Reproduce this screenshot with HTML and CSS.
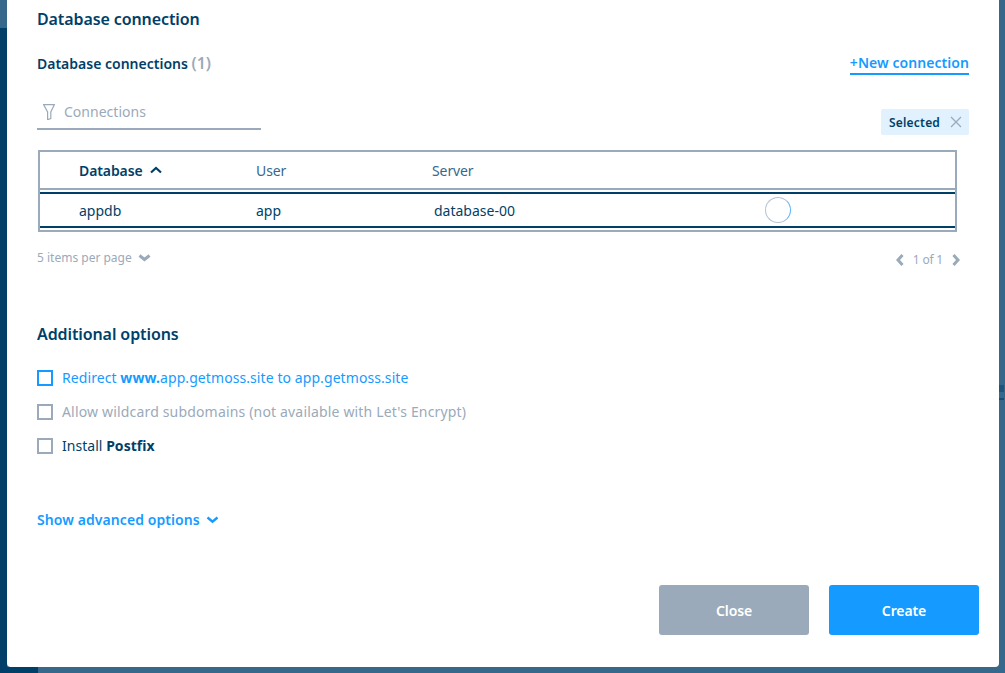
FILE: index.html
```html
<!DOCTYPE html>
<html lang="en">
<head>
<meta charset="utf-8">
<title>Database connection</title>
<link rel="stylesheet" href="styles.css">
</head>
<body>
<div class="backdrop-tab top"></div>
<div class="backdrop-tab bottom"></div>
<div class="backdrop-tab right-a"></div>
<div class="backdrop-tab right-b"></div>
<main class="modal">
  <h2 class="title">Database connection</h2>
  <div class="conn-head">
    <h3 class="subtitle">Database connections <span class="count">(1)</span></h3>
    <a class="new-link">+New connection</a>
  </div>
  <div class="filter-row">
    <div class="filter">
      <svg class="funnel" width="12" height="16" viewBox="0 0 12 16" fill="none" stroke="#9aaaba" stroke-width="1.2"><path d="M.7.7h10.6L7.8 8v6.6l-3.2 1V8z"/></svg>
      <span>Connections</span>
    </div>
    <div class="chip">Selected
      <svg width="12" height="12" viewBox="0 0 12 12" stroke="#9aaaba" stroke-width="1.3"><path d="M1 1l10 10M11 1L1 11"/></svg>
    </div>
  </div>
  <div class="table">
    <div class="row head">
      <span class="col c1 sort">Database
        <svg width="12" height="8" viewBox="0 0 12 8" fill="none" stroke="#003f68" stroke-width="2.2"><path d="M1 6.5l5-4.5 5 4.5"/></svg>
      </span>
      <span class="col c2">User</span>
      <span class="col c3">Server</span>
    </div>
    <div class="row body">
      <span class="col c1">appdb</span>
      <span class="col c2">app</span>
      <span class="col c3 srv">database-00</span>
      <span class="radio"></span>
    </div>
  </div>
  <div class="pager">
    <span class="per">5 items per page
      <svg width="13" height="8" viewBox="0 0 13 8" fill="none" stroke="#9aaaba" stroke-width="3"><path d="M1.5 1.5l5 4 5-4"/></svg>
    </span>
    <span class="pages">
      <svg width="8" height="12" viewBox="0 0 8 12" fill="none" stroke="#9aaaba" stroke-width="3"><path d="M6.5 1L2 6l4.5 5"/></svg>
      <span>1 of 1</span>
      <svg width="8" height="12" viewBox="0 0 8 12" fill="none" stroke="#9aaaba" stroke-width="3"><path d="M1.5 1L6 6l-4.5 5"/></svg>
    </span>
  </div>
  <h2 class="title options">Additional options</h2>
  <label class="check blue"><span class="box"></span><span>Redirect <b>www.</b>app.getmoss.site to app.getmoss.site</span></label>
  <label class="check muted"><span class="box"></span><span>Allow wildcard subdomains (not available with Let's Encrypt)</span></label>
  <label class="check dark"><span class="box"></span><span>Install <b>Postfix</b></span></label>
  <a class="advanced">Show advanced options
    <svg width="13" height="8" viewBox="0 0 13 8" fill="none" stroke="#159bff" stroke-width="2.4"><path d="M1.5 1.5l5 4.2 5-4.2"/></svg>
  </a>
  <div class="actions">
    <button class="btn close">Close</button>
    <button class="btn create">Create</button>
  </div>
</main>
</body>
</html>
```
FILE: styles.css
```css
* { box-sizing: border-box; }
html, body { margin: 0; height: 100%; overflow: hidden; }
body {
  background: #36688c;
  font-family: "Noto Sans", sans-serif;
  color: #003f68;
  position: relative;
  padding: 0 6px 6px 7px;
}
.backdrop-tab { position: absolute; background: #003f68; }
.backdrop-tab.top { left: 0; top: 28px; width: 7px; height: 645px; }
.backdrop-tab.bottom { left: 0; top: 667px; width: 38px; height: 6px; }
.backdrop-tab.right-a { right: 1px; top: 385px; width: 5px; height: 7px; opacity: .45; }
.backdrop-tab.right-b { right: 1px; top: 398px; width: 5px; height: 2px; opacity: .6; }
.modal {
  position: relative;
  height: 667px;
  background: #fff;
  border-radius: 0 0 4px 4px;
  padding: 9px 20px 32px 30px;
  display: flex;
  flex-direction: column;
}
.title { margin: 0; font-size: 16px; line-height: 20px; font-weight: 600; letter-spacing: -.1px; }
.conn-head { display: flex; justify-content: space-between; align-items: flex-start; margin-top: 25px; padding-right: 10px; }
.subtitle { margin: 0; font-size: 14px; line-height: 18px; font-weight: 600; }
.count { color: #9aaaba; font-size: 16px; }
.new-link { color: #159bff; font-size: 14px; line-height: 18px; font-weight: 600; letter-spacing: .06px; border-bottom: 2px solid #159bff; padding-bottom: 1px; }
.filter-row { display: flex; justify-content: space-between; align-items: flex-start; margin-top: 20px; padding-right: 10px; height: 40px; }
.filter { width: 224px; height: 35px; border-bottom: 2px solid #9aaaba; color: #9aaaba; font-size: 14px; display: flex; align-items: center; gap: 10px; padding: 0 0 0 6px; letter-spacing: .02px; }
.funnel { margin-right: -1px; }
.chip { background: #e1f1fd; border-radius: 2px; height: 26px; width: 88px; padding: 0 7px 0 8px; display: flex; align-items: center; justify-content: space-between; font-size: 12px; font-weight: 600; letter-spacing: .2px; margin-top: 14px; }
.table { margin: 15px 22px 0 1px; height: 82px; flex: none; border: 2px solid #9aaaba; }
.row { display: flex; align-items: center; position: relative; font-size: 14px; }
.row.head { height: 38px; color: #36688c; border-bottom: 2px solid #9aaaba; letter-spacing: -.1px; }
.row.body { height: 36px; margin-top: 2px; border-top: 2px solid #003f68; border-bottom: 2px solid #003f68; }
.col.c1 { width: 216px; padding-left: 39px; }
.col.c2 { width: 176px; }
.col.srv { padding-left: 2px; }
.sort { color: #003f68; font-weight: 600; display: flex; align-items: center; gap: 7px; }
.radio { position: absolute; left: 725px; top: 3px; width: 26px; height: 26px; border-radius: 50%; border: 1px solid #b3c3d2; border-right-color: #58b4ff; }
.pager { display: flex; justify-content: space-between; margin-top: 14px; padding-right: 19px; color: #9aaaba; font-size: 12px; line-height: 20px; }
.per { display: flex; align-items: center; gap: 6px; }
.pages { display: flex; align-items: center; gap: 9px; letter-spacing: -.2px; margin-top: 4px; }
.options { margin-top: 54px; }
.check { display: flex; align-items: center; gap: 9px; font-size: 14px; line-height: 20px; margin-top: 14px; letter-spacing: .03px; }
.title.options + .check { margin-top: 24px; }
.box { width: 16px; height: 16px; flex: none; border: 2px solid #9aaaba; }
.blue { color: #159bff; letter-spacing: .08px; }
.blue .box { border-color: #159bff; }
.muted { color: #9aaaba; letter-spacing: .17px; }
b { font-weight: 700; }
.advanced { margin-top: 54px; color: #159bff; font-size: 14px; font-weight: 600; line-height: 20px; letter-spacing: .08px; display: flex; align-items: center; gap: 6px; }
.actions { margin-top: auto; display: flex; justify-content: flex-end; gap: 20px; }
.btn { width: 150px; height: 50px; border: 0; border-radius: 3px; color: #fff; font: 600 14px "Noto Sans", sans-serif; letter-spacing: -.1px; }
.close { background: #9aaaba; }
.create { background: #159bff; }
```
